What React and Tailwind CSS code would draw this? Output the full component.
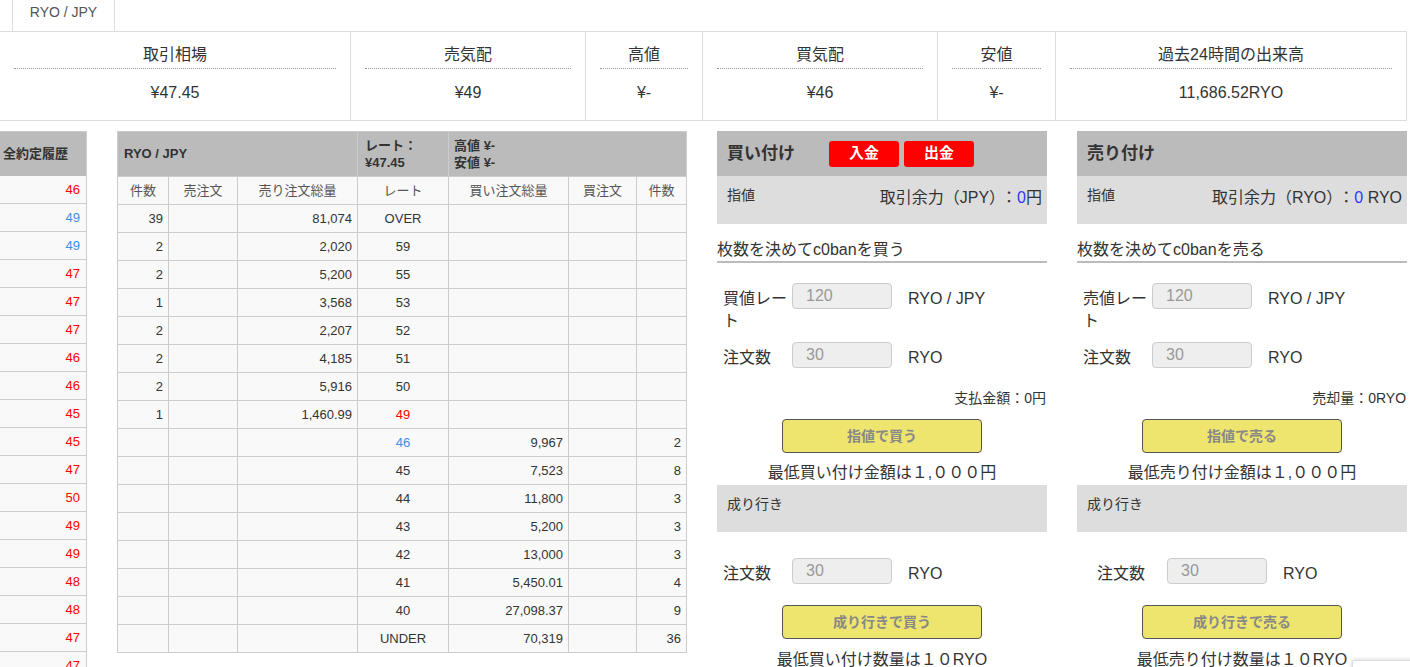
import React from 'react';

const FONT = { fontFamily: '"Liberation Sans", "Noto Sans CJK JP", sans-serif' };

const stats = [
  { w: 'w-[351px]', label: '取引相場', value: '¥47.45' },
  { w: 'w-[235px]', label: '売気配', value: '¥49' },
  { w: 'w-[117px]', label: '高値', value: '¥-' },
  { w: 'w-[235px]', label: '買気配', value: '¥46' },
  { w: 'w-[118px]', label: '安値', value: '¥-' },
  { w: 'w-[351px]', label: '過去24時間の出来高', value: '11,686.52RYO' },
];

const history = [
  ['46', 'r'], ['49', 'b'], ['49', 'b'], ['47', 'r'], ['47', 'r'], ['47', 'r'],
  ['46', 'r'], ['46', 'r'], ['45', 'r'], ['45', 'r'], ['47', 'r'], ['50', 'r'],
  ['49', 'r'], ['49', 'r'], ['48', 'r'], ['48', 'r'], ['47', 'r'], ['47', 'r'],
];

const book = [
  { n: '39', sell: '81,074', rate: 'OVER' },
  { n: '2', sell: '2,020', rate: '59' },
  { n: '2', sell: '5,200', rate: '55' },
  { n: '1', sell: '3,568', rate: '53' },
  { n: '2', sell: '2,207', rate: '52' },
  { n: '2', sell: '4,185', rate: '51' },
  { n: '2', sell: '5,916', rate: '50' },
  { n: '1', sell: '1,460.99', rate: '49', color: 'text-[#ff0000]' },
  { rate: '46', buy: '9,967', bn: '2', color: 'text-[#3b8eea]' },
  { rate: '45', buy: '7,523', bn: '8' },
  { rate: '44', buy: '11,800', bn: '3' },
  { rate: '43', buy: '5,200', bn: '3' },
  { rate: '42', buy: '13,000', bn: '3' },
  { rate: '41', buy: '5,450.01', bn: '4' },
  { rate: '40', buy: '27,098.37', bn: '9' },
  { rate: 'UNDER', buy: '70,319', bn: '36' },
];

const td = 'h-[28px] border border-[#ccc] px-[5px] py-0 leading-[16px]';

function Field({ label, marketIndent }) {
  return (
    <div className={`flex items-center ${marketIndent ? 'pl-[20px]' : 'pl-[6px]'}`}>
      <div className={`${marketIndent ? 'w-[70px]' : 'w-[69px]'} pt-[6px] text-[16px] leading-[22px] text-[#333]`}>
        {label}
      </div>
      <input
        readOnly
        placeholder="30"
        className="w-[100px] h-[26px] rounded-[4px] border border-[#ccc] bg-[#eee] pl-[13px] text-[16px] leading-[20px] placeholder:text-[#999] outline-none"
      />
      <span className="ml-[16px] pt-[6px] text-[16px] leading-[22px] text-[#333]">RYO</span>
    </div>
  );
}

function YellowButton({ children }) {
  return (
    <div className="flex justify-center">
      <button className="w-[200px] h-[34px] rounded-[4px] border border-[#555] bg-[#ede56e] text-[14px] font-bold text-[#888]">
        {children}
      </button>
    </div>
  );
}

function TradePanel({ buy }) {
  return (
    <div className="w-[330px] flex flex-col">
      <div className="h-[45px] bg-[#bbb] flex items-center pl-[10px]">
        <span className="text-[17px] font-bold text-[#333] w-[102px]">{buy ? '買い付け' : '売り付け'}</span>
        {buy && (
          <div className="flex gap-[5px]">
            <button className="w-[70px] h-[26px] rounded-[3px] bg-[#ff0000] text-white text-[15px] font-bold">入金</button>
            <button className="w-[70px] h-[26px] rounded-[3px] bg-[#ff0000] text-white text-[15px] font-bold">出金</button>
          </div>
        )}
      </div>
      <div className="h-[48px] bg-[#ddd] flex justify-between pl-[10px] pr-[5px] pt-[9px]">
        <span className="text-[14px] leading-[20px] text-[#333]">指値</span>
        <span className="text-[16px] leading-[26px] text-[#333]">
          {buy ? '取引余力（JPY）' : '取引余力（RYO）'}
          <span className="ml-[4px]">：</span>
          <span className="text-[#3333ff]">0</span>
          {buy ? '円' : ' RYO'}
        </span>
      </div>
      <div className="mt-[16px] pb-[1px] border-b-2 border-[#bbb] text-[16px] leading-[20px] text-[#333]">
        {buy ? '枚数を決めてc0banを買う' : '枚数を決めてc0banを売る'}
      </div>
      <div className="mt-[20px] flex items-start pl-[6px]">
        <div className="w-[66px] mr-[3px] pt-[5px] text-[16px] leading-[22px] text-[#333]">
          {buy ? '買値レート' : '売値レート'}
        </div>
        <input
          readOnly
          placeholder="120"
          className="w-[100px] h-[26px] rounded-[4px] border border-[#ccc] bg-[#eee] pl-[13px] text-[16px] placeholder:text-[#999] outline-none"
        />
        <span className="ml-[16px] pt-[5px] text-[16px] leading-[22px] text-[#333]">RYO / JPY</span>
      </div>
      <div className="mt-[9px]">
        <Field label="注文数" />
      </div>
      <div className="mt-[19px] text-right pr-[1px] text-[14px] leading-[20px] text-[#333]">
        {buy ? '支払金額：0円' : '売却量：0RYO'}
      </div>
      <div className="mt-[11px]">
        <YellowButton>{buy ? '指値で買う' : '指値で売る'}</YellowButton>
      </div>
      <div className="mt-[10px] text-center text-[16px] leading-[20px] text-[#333]">
        {buy ? '最低買い付け金額は１,０００円' : '最低売り付け金額は１,０００円'}
      </div>
      <div className="mt-[2px] h-[47px] bg-[#ddd] pl-[10px] pt-[9px] text-[14px] leading-[20px] text-[#333]">成り行き</div>
      <div className="mt-[25px]">
        <Field label="注文数" marketIndent={!buy} />
      </div>
      <div className="mt-[20px]">
        <YellowButton>{buy ? '成り行きで買う' : '成り行きで売る'}</YellowButton>
      </div>
      <div className="mt-[11px] text-center text-[16px] leading-[20px] text-[#333]">
        {buy ? '最低買い付け数量は１０RYO' : '最低売り付け数量は１０RYO'}
      </div>
    </div>
  );
}

export default function App() {
  return (
    <div className="relative w-[1410px] h-[667px] overflow-hidden bg-white text-[#333]" style={FONT}>
      {/* Tabs */}
      <div className="h-[31px] flex">
        <div className="ml-[12px] w-[103px] border-l border-r border-[#ddd] text-center pt-[2px] text-[14px] leading-[20px] text-[#555]">
          RYO / JPY
        </div>
      </div>

      {/* Stats */}
      <div className="w-[1407px] flex border-t border-b border-[#ddd]">
        {stats.map((s, i) => (
          <div key={i} className={`${s.w} h-[88px] border-r border-[#ddd] px-[14px] pt-[12px]`}>
            <div className="pb-[2px] border-b border-dotted border-[#999] text-center text-[16px] leading-[22px] text-[#333]">
              {s.label}
            </div>
            <div className="mt-[13px] text-center text-[16px] leading-[22px] text-[#333]">{s.value}</div>
          </div>
        ))}
      </div>

      <div className="flex items-start mt-[10px]">
        {/* History column */}
        <div className="w-[87px] border-r border-[#ccc]">
          <div className="h-[45px] bg-[#bbb] border-t border-[#ccc] flex items-center pl-[3px] text-[13px] font-bold text-[#333]">
            全約定履歴
          </div>
          {history.map(([v, c], i) => (
            <div
              key={i}
              className={`h-[28px] bg-[#f9f9f9] border-b border-[#ccc] flex items-center justify-end pr-[6px] text-[13px] ${c === 'r' ? 'text-[#ff0000]' : 'text-[#3b8eea]'}`}
            >
              {v}
            </div>
          ))}
        </div>

        {/* Order book */}
        <div className="ml-[30px]">
          <table className="w-[569px] table-fixed border-collapse text-[13px]">
            <colgroup>
              <col className="w-[51px]" />
              <col className="w-[69px]" />
              <col className="w-[120px]" />
              <col className="w-[91px]" />
              <col className="w-[120px]" />
              <col className="w-[68px]" />
              <col className="w-[50px]" />
            </colgroup>
            <thead>
              <tr className="bg-[#bbb] font-bold text-[#333]">
                <td colSpan={3} className="h-[45px] border border-[#ccc] px-[6px] text-left">RYO / JPY</td>
                <td className="h-[45px] border border-[#ccc] px-[7px] text-left leading-[17px]">
                  レート：<br />¥47.45
                </td>
                <td colSpan={3} className="h-[45px] border border-[#ccc] px-[5px] text-left leading-[17px]">
                  高値 ¥-<br />安値 ¥-
                </td>
              </tr>
            </thead>
            <tbody className="bg-[#f9f9f9] text-[#333]">
              <tr className="text-[#555]">
                <td className={`${td} text-center`}>件数</td>
                <td className={`${td} text-center`}>売注文</td>
                <td className={`${td} text-center`}>売り注文総量</td>
                <td className={`${td} text-center`}>レート</td>
                <td className={`${td} text-center`}>買い注文総量</td>
                <td className={`${td} text-center`}>買注文</td>
                <td className={`${td} text-center`}>件数</td>
              </tr>
              {book.map((r, i) => (
                <tr key={i}>
                  <td className={`${td} text-right`}>{r.n}</td>
                  <td className={td}></td>
                  <td className={`${td} text-right`}>{r.sell}</td>
                  <td className={`${td} text-center ${r.color || ''}`}>{r.rate}</td>
                  <td className={`${td} text-right`}>{r.buy}</td>
                  <td className={td}></td>
                  <td className={`${td} text-right`}>{r.bn}</td>
                </tr>
              ))}
            </tbody>
          </table>
        </div>

        <div className="ml-[30px]">
          <TradePanel buy />
        </div>
        <div className="ml-[30px]">
          <TradePanel />
        </div>
      </div>

      {/* badge peeking from the corner */}
      <div className="absolute left-[1352px] top-[660px] w-[70px] h-[30px] bg-white border border-[#ddd] rounded-[2px] shadow-[0_0_4px_rgba(0,0,0,0.2)]" />
    </div>
  );
}
